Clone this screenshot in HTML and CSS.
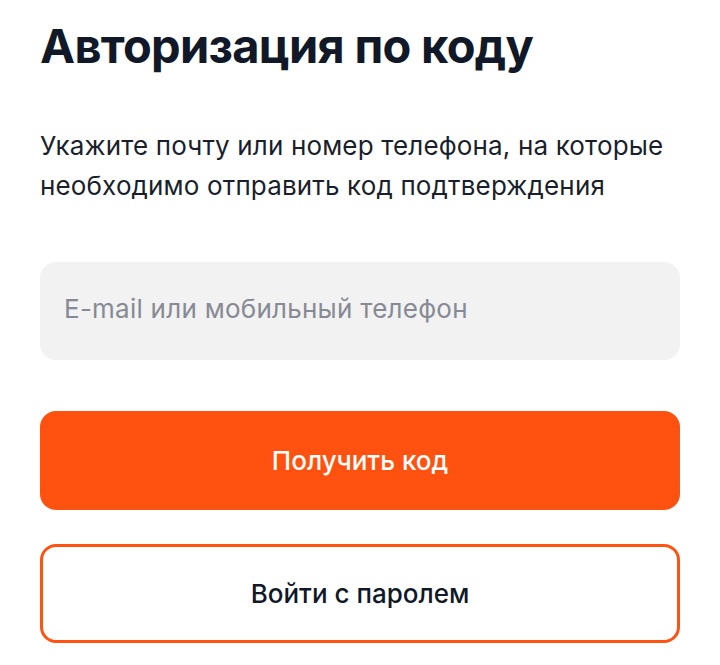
FILE: index.html
```html
<!DOCTYPE html>
<html lang="ru">
<head>
    <meta charset="UTF-8">
    <meta name="viewport" content="width=device-width, initial-scale=1.0">
    <title>Авторизация по коду</title>
    <link rel="stylesheet" href="styles.css">
</head>
<body>
    <div class="auth">
        <h1 class="auth-title">Авторизация по коду</h1>
        <p class="auth-text">Укажите почту или номер телефона, на которые необходимо отправить код подтверждения</p>
        <form class="auth-form">
            <input class="auth-input" type="text" placeholder="E-mail или мобильный телефон">
            <button class="btn btn-primary" type="button">Получить код</button>
            <button class="btn btn-outline" type="button">Войти с паролем</button>
        </form>
    </div>
</body>
</html>
```

FILE: styles.css
```css
body {
    font-family: Inter, "Noto Sans", sans-serif;
    background-color: #ffffff;
    color: #111827;
    margin: 0;
    padding: 18px 40px 0;
}
.auth {
    max-width: 640px;
}
.auth-title {
    font-size: 47px;
    font-weight: 700;
    line-height: 56px;
    letter-spacing: -0.7px;
    margin: 0 0 52px;
}
.auth-text {
    font-size: 26px;
    line-height: 40px;
    letter-spacing: 0.15px;
    margin: 0 0 56px;
    color: #1a1f2b;
}
.auth-form {
    display: flex;
    flex-direction: column;
}
.auth-input {
    box-sizing: border-box;
    height: 98px;
    border: none;
    border-radius: 16px;
    background-color: #f2f2f2;
    padding: 0 24px 6px;
    font-family: inherit;
    font-size: 26px;
    letter-spacing: 0.25px;
    color: #111827;
    outline: none;
    margin-bottom: 51px;
}
.auth-input::placeholder {
    color: #878a94;
}
.btn {
    box-sizing: border-box;
    height: 99px;
    border-radius: 16px;
    font-family: inherit;
    font-size: 26px;
    font-weight: 500;
    cursor: pointer;
}
.btn-primary {
    background-color: #ff5210;
    border: none;
    color: #ffffff;
    margin-bottom: 34px;
}
.btn-outline {
    background-color: #ffffff;
    border: 3px solid #ff5210;
    color: #111827;
}
```
